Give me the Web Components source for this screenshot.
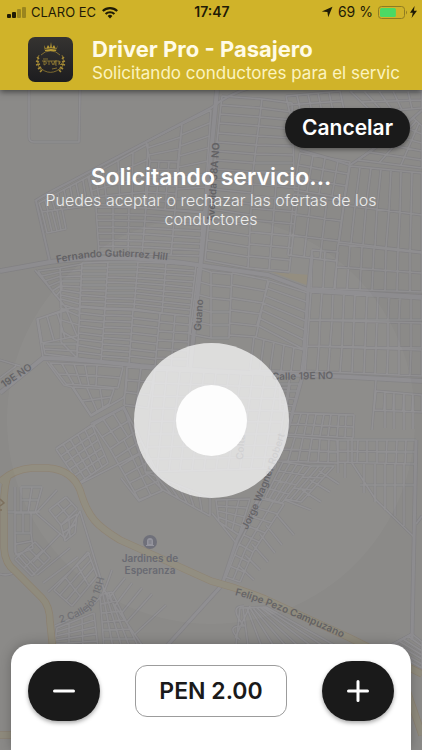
<!DOCTYPE html>
<html lang="es">
<head>
<meta charset="utf-8">
<meta name="viewport" content="width=device-width, initial-scale=1">
<title>Driver Pro - Pasajero</title>
<style>
    body {
        margin: 0;
        font-family: Inter, "Liberation Sans", sans-serif;
        background: #8b8a88;
    }
</style>
</head>
<body>
<request-screen>
    <notification-header slot="header">
        <status-bar slot="status" carrier="CLARO EC" time="17:47" battery="69"></status-bar>
        <span slot="title">Driver Pro - Pasajero</span>
        <span slot="message">Solicitando conductores para el servic</span>
    </notification-header>
    <street-map slot="map"></street-map>
    <search-pulse slot="map"></search-pulse>
    <pill-button slot="action">Cancelar</pill-button>
    <span slot="title">Solicitando servicio...</span>
    <span slot="text">Puedes aceptar o rechazar las ofertas de los conductores</span>
    <offer-panel slot="panel" currency="PEN" amount="2"></offer-panel>
</request-screen>

<script>
class RequestScreen extends HTMLElement {
    constructor() {
        super();
        this.attachShadow({ mode: 'open' }).innerHTML = `
            <style>
                :host {
                    display: flex;
                    flex-direction: column;
                    position: relative;
                    min-height: 100vh;
                    overflow: hidden;
                }
                header, main, footer { position: relative; }
                main {
                    flex: 1;
                    display: flex;
                    flex-direction: column;
                    padding: 18px 12px;
                }
                .action { align-self: flex-end; }
                h1 {
                    margin: 15px 0 0;
                    font-size: 23px;
                    line-height: 28px;
                    font-weight: 600;
                    text-align: center;
                    color: #fff;
                }
                p {
                    margin: 0 24px;
                    font-size: 16px;
                    line-height: 19px;
                    font-weight: 300;
                    text-align: center;
                    color: #ececec;
                }
                footer { padding: 0 11px; }
            </style>
            <slot name="map"></slot>
            <header><slot name="header"></slot></header>
            <main>
                <div class="action"><slot name="action"></slot></div>
                <h1><slot name="title"></slot></h1>
                <p><slot name="text"></slot></p>
            </main>
            <footer><slot name="panel"></slot></footer>
        `;
    }
}

class StatusBar extends HTMLElement {
    constructor() {
        super();
        const level = Number(this.getAttribute('battery'));
        this.attachShadow({ mode: 'open' }).innerHTML = `
            <style>
                :host {
                    display: grid;
                    grid-template-columns: 1fr auto 1fr;
                    align-items: center;
                    height: 24px;
                    padding: 0 5px 0 7px;
                    font-size: 14px;
                    line-height: 24px;
                    color: #1f1b06;
                }
                div { display: flex; align-items: center; gap: 5px; }
                .right { justify-content: flex-end; }
                .carrier { font-size: 13px; }
                .battery { display: flex; align-items: center; gap: 2px; }
                b { font-weight: 600; }
                svg { display: block; }
            </style>
            <div>
                <svg width="19" height="13" fill="#1f1b06">
                    <rect y="8" width="4" height="4" rx="1"/>
                    <rect x="5" y="6" width="4" height="6" rx="1"/>
                    <rect x="10" y="3" width="4" height="9" rx="1" opacity=".3"/>
                    <rect x="15" y="1" width="4" height="11" rx="1" opacity=".3"/>
                </svg>
                <span class="carrier">${this.getAttribute('carrier')}</span>
                <svg width="18" height="13" viewBox="0 0 18 13" fill="none" stroke="#1f1b06" stroke-width="2.2">
                    <path d="M1.8 5a10.3 10.3 0 0 1 14.4 0M4.6 8a6.4 6.4 0 0 1 8.8 0"/>
                    <path d="M9 12.5 6.6 10a3.5 3.5 0 0 1 4.8 0z" fill="#1f1b06" stroke="none"/>
                </svg>
            </div>
            <b>${this.getAttribute('time')}</b>
            <div class="right">
                <svg width="12" height="12" viewBox="0 0 12 12" fill="#1f1b06"><path d="M11.5.7 7.2 11.3 6.4 6 .8 5.6z"/></svg>
                <span>${level} %</span>
                <span class="battery">
                    <svg width="30" height="13" viewBox="0 0 30 13">
                        <rect x=".5" y=".5" width="26" height="12" rx="3" fill="none" stroke="#8f7c22"/>
                        <rect x="2" y="2" width="${level / 100 * 23}" height="9" rx="1.5" fill="#4bd964"/>
                        <path d="M28 4.5q2 2 0 4z" fill="#8f7c22"/>
                    </svg>
                    <svg width="7" height="12" viewBox="0 0 7 12" fill="#1f1b06"><path d="M4.6 0 0 6.7h2.8L1.6 12 7 4.8H3.9z"/></svg>
                </span>
            </div>
        `;
    }
}

class NotificationHeader extends HTMLElement {
    constructor() {
        super();
        this.attachShadow({ mode: 'open' }).innerHTML = `
            <style>
                :host {
                    display: block;
                    background: #d0b329;
                    box-shadow: 0 2px 6px rgba(0, 0, 0, .5);
                }
                .row {
                    display: flex;
                    align-items: flex-start;
                    gap: 19px;
                    padding: 13px 18px 5px 28px;
                }
                svg { flex: none; }
                .texts { min-width: 0; color: #fffbe6; }
                h2, p {
                    margin: 0;
                    line-height: 24px;
                    white-space: nowrap;
                }
                h2 { font-size: 22px; font-weight: 700; }
                p { font-size: 17px; font-weight: 400; color: #fcf3c0; }
            </style>
            <slot name="status"></slot>
            <div class="row">
                <svg width="45" height="45" viewBox="0 0 45 45" role="img" aria-label="Driver Pro">
                    <defs><linearGradient id="bg" x2="0" y2="1"><stop stop-color="#353331"/><stop offset="1" stop-color="#1d1d1f"/></linearGradient></defs>
                    <rect width="45" height="45" rx="7" fill="url(#bg)"/>
                    <g fill="none" stroke="#a58a35">
                        <path d="M13 18a13 13 0 0 1 19 0M12 30a13 13 0 0 0 21 0" stroke-width=".7"/>
                        <path d="M11 18q-4 9 3 16M34 18q4 9-3 16" stroke-width=".7"/>
                        <path d="m9 20 2 2m-3 2 3 1m-3 3 4-1m-2 5 3-2m-1 5 2-2M36 20l-2 2m3 2-3 1m3 3-4-1m2 5-3-2m1 5-2-2" stroke-width="1.6"/>
                    </g>
                    <path d="m16 8 2 4 2-4 2 3 1-6 1 6 2-3 2 4 2-4-2 6H17z" fill="#b89a35"/>
                    <path d="M17 12.500q6-2 12 0" fill="none" stroke="#282725" stroke-width=".7"/>
                    <path d="M15 22h5M14 24h17M16 24v4m0-4q5 2 0 4m5-4v4m2-4 2 4 2-4m2 0h-2v4h2m-2-2h2m2 2v-4q3 1 0 2l2 2M24 32l5-1" fill="none" stroke="#a68c38" stroke-width=".7"/>
                </svg>
                <div class="texts">
                    <h2><slot name="title"></slot></h2>
                    <p><slot name="message"></slot></p>
                </div>
            </div>
        `;
    }
}

class PillButton extends HTMLElement {
    constructor() {
        super();
        this.attachShadow({ mode: 'open' }).innerHTML = `
            <style>
                :host { display: block; }
                button {
                    display: block;
                    height: 40px;
                    padding: 0 17px;
                    border: 0;
                    border-radius: 20px;
                    background: #1a1a1a;
                    color: #fff;
                    font: 600 21px/40px Inter, "Liberation Sans", sans-serif;
                    box-shadow: 0 2px 4px rgba(0, 0, 0, .35);
                }
            </style>
            <button type="button"><slot></slot></button>
        `;
    }
}

class SearchPulse extends HTMLElement {
    constructor() {
        super();
        this.attachShadow({ mode: 'open' }).innerHTML = `
            <style>
                :host {
                    position: absolute;
                    left: 50%;
                    top: 56%;
                    transform: translate(-50%, -50%);
                    display: grid;
                    place-items: center;
                }
                i { grid-area: 1 / 1; border-radius: 50%; }
                .wave { width: 408px; height: 408px; background: rgba(255, 255, 255, .03); }
                .ring { width: 155px; height: 155px; background: rgba(255, 255, 255, .7); }
                .core { width: 71px; height: 71px; background: rgba(255, 255, 255, .93); }
            </style>
            <i class="wave"></i><i class="ring"></i><i class="core"></i>
        `;
    }
}

// Each block: four corners (clockwise from top left), columns, rows.
const BLOCKS = [
    [[39, 203], [95, 173], [100, 204], [42, 212], 9, 1],
    [[42, 212], [62, 209], [66, 229], [47, 233], 4, 1],
    [[88, 177], [148, 144], [145, 208], [94, 204], 4, 4],
    [[146, 142], [182, 124], [178, 162], [150, 161], 1, 3],
    [[150, 161], [178, 162], [175, 210], [146, 208], 3, 6],
    [[182, 124], [211, 110], [204, 212], [175, 210], 1, 8],
    [[96, 207], [146, 208], [142, 254], [99, 253], 3, 7],
    [[146, 208], [203, 213], [200, 256], [142, 254], 2, 7],
    [[222, 96], [262, 99], [253, 172], [214, 169], 1, 8],
    [[262, 99], [292, 103], [294, 172], [253, 172], 1, 8],
    [[214, 169], [253, 172], [248, 268], [205, 260], 1, 9],
    [[253, 172], [300, 176], [289, 272], [248, 268], 2, 8],
    [[286, 96], [340, 91], [344, 110], [290, 114], 5, 2],
    [[300, 153], [350, 162], [344, 198], [294, 190], 4, 3],
    [[294, 194], [344, 201], [336, 261], [288, 255], 3, 3],
    [[350, 166], [422, 173], [422, 215], [344, 205], 7, 1],
    [[344, 205], [422, 215], [422, 252], [339, 242], 7, 1],
    [[338, 244], [422, 253], [422, 292], [335, 289], 7, 2],
    [[350, 91], [422, 91], [422, 108], [372, 112], 5, 2],
    [[358, 160], [413, 118], [422, 126], [422, 168], 5, 3],
    [[312, 250], [338, 252], [334, 289], [311, 288], 2, 1],
    [[38, 271], [60, 268], [62, 289], [56, 296], 1, 5],
    [[60, 268], [82, 264], [79, 316], [61, 308], 1, 9],
    [[82, 263], [108, 262], [105, 308], [80, 306], 1, 8],
    [[108, 262], [138, 262], [134, 309], [105, 308], 1, 9],
    [[138, 262], [166, 263], [162, 313], [134, 309], 1, 9],
    [[166, 263], [196, 265], [190, 316], [162, 313], 1, 9],
    [[38, 319], [66, 309], [77, 336], [42, 343], 3, 1],
    [[61, 309], [80, 308], [77, 358], [61, 342], 1, 3],
    [[80, 307], [105, 309], [101, 362], [77, 358], 1, 8],
    [[105, 309], [133, 310], [129, 364], [101, 362], 1, 9],
    [[133, 310], [160, 313], [155, 367], [129, 364], 1, 7],
    [[160, 313], [190, 316], [187, 368], [155, 367], 2, 6],
    [[43, 344], [77, 344], [77, 358], [45, 354], 1, 2],
    [[50, 363], [97, 365], [96, 386], [66, 384], 4, 2],
    [[97, 365], [123, 367], [118, 388], [96, 386], 1, 2],
    [[73, 387], [114, 389], [109, 404], [91, 415], 3, 2],
    [[127, 367], [155, 369], [148, 408], [124, 405], 2, 3],
    [[155, 370], [290, 376], [275, 468], [145, 472], 11, 8],
    [[211, 272], [232, 274], [229, 338], [211, 338], 1, 5],
    [[232, 273], [268, 280], [256, 337], [229, 335], 1, 5],
    [[269, 281], [308, 293], [303, 349], [257, 325], 1, 6],
    [[198, 268], [211, 272], [211, 338], [190, 334], 1, 5],
    [[254, 337], [304, 350], [301, 372], [250, 370], 5, 1],
    [[311, 292], [422, 299], [422, 320], [309, 320], 10, 1],
    [[309, 320], [422, 323], [422, 348], [307, 346], 10, 1],
    [[307, 346], [422, 350], [422, 376], [305, 371], 10, 1],
    [[280, 384], [299, 384], [292, 413], [280, 410], 2, 4],
    [[293, 413], [354, 415], [353, 438], [287, 434], 8, 2],
    [[376, 391], [422, 395], [422, 412], [374, 410], 5, 1],
    [[286, 436], [337, 440], [338, 463], [278, 461], 6, 2],
    [[338, 440], [416, 440], [415, 464], [338, 462], 8, 2],
    [[56, 449], [92, 425], [108, 463], [79, 483], 5, 5],
    [[93, 424], [123, 408], [137, 431], [110, 449], 3, 2],
    [[110, 449], [137, 431], [162, 491], [139, 500], 2, 6],
    [[145, 472], [210, 498], [210, 516], [163, 490], 6, 1],
    [[21, 487], [42, 487], [35, 513], [21, 513], 2, 2],
    [[15, 513], [31, 513], [31, 533], [15, 533], 2, 1],
    [[15, 533], [31, 533], [33, 548], [16, 555], 1, 2],
    [[49, 510], [66, 497], [77, 509], [61, 525], 2, 2],
    [[61, 525], [77, 514], [75, 533], [65, 541], 2, 2],
    [[15, 559], [35, 542], [50, 558], [32, 576], 3, 2],
    [[54, 590], [88, 552], [97, 576], [72, 606], 3, 3],
    [[100, 595], [112, 592], [139, 648], [104, 648], 4, 6],
    [[57, 628], [94, 613], [98, 648], [54, 648], 3, 5],
    [[216, 500], [250, 499], [239, 535], [219, 522], 3, 4],
    [[283, 462], [311, 466], [282, 503], [265, 498], 4, 4],
    [[262, 499], [284, 504], [253, 552], [239, 544], 2, 5],
    [[239, 544], [253, 552], [240, 582], [226, 577], 2, 3],
    [[311, 466], [334, 466], [301, 502], [285, 499], 3, 3],
    [[240, 608], [266, 607], [334, 645], [236, 645], 8, 1],
    [[386, 648], [412, 634], [422, 642], [422, 668], 6, 1]
];

const STREETS = [
    'M29 90V137Q29 142 34 142H79L80 90',
    'M0 360 20 366M0 378 16 366',
    'M35 270 68 310 37 319 43 357M47 362 64 385 72 387 91 416 123 398Q127 394 127 368',
    'M57 448 80 433 124 407 160 478M79 484 140 453M121 478 139 501 163 490',
    'M352 438V463L376 500 414 537M364 464V493M375 464V502M385 464V510M395 464V516M404 464V526M338 463V473M345 463V478M360 485H415',
    'M376 380 372 430M385 395V428M394 395V429M404 395V430M413 395V429',
    'M15 487V552L35 575M5 512H40M36 513 57 490M36 513 65 538 80 511M0 574Q10 577 17 570',
    'M37 575 70 548M43 583 78 557M48 592 90 553M33 562 61 533',
    'M80 511 104 590 144 648M104 590Q98 608 55 626M112 570 104 592M125 578 108 599M132 583 114 607M142 588 120 615M152 594 127 622M166 605 134 635',
    'M285 500 311 510M276 514 294 535M266 525 282 545M260 534 275 553M252 544 268 562M245 555 260 570M238 565 254 580M302 490 321 502M310 480 330 492M319 471 339 484',
    'M244 606Q228 606 244 626Q224 625 240 640M250 606 235 638',
    'M212 513 236 543'
];

// [path, width]
const ROADS = [
    ['M35 201Q48 193 68 183L146 142 211 108Q228 94 250 88', 2],
    ['M36 201 50 262', 2],
    ['M0 271 50 262Q120 252 211 267L268 275 308 290 422 297', 4],
    ['M217 90 210 165 203 240 197 300 190 370', 4],
    ['M0 393 43 358Q80 359 140 366L211 371 280 374 350 377 422 381', 4],
    ['M312 255 308 292 303 374 290 422 266 484 237 540 222 585 165 648', 3],
    ['M300 150Q326 157 350 165 390 140 422 110', 2],
    ['M416 440 414 540 412 640', 3],
    ['M422 516 416 524M412 634 386 648', 2],
    ['M91 424 124 407 145 470', 2]
];

const AVENUES = 'M0 482Q14 469 32 468H48Q72 470 80 490C88 518 97 526 120 540L211 581Q238 588 265 599L350 638 422 674M8 475Q3 490 4 512V548Q5 564 15 571L42 598Q50 606 50 622L54 660M0 735H60M395 655 422 735';

class StreetMap extends HTMLElement {
    constructor() {
        super();
        const grid = STREETS.join('') + BLOCKS.map(b => this.block(...b)).join('');
        const roads = (color, extra) => ROADS.map(([d, w]) =>
            `<path d="${d}" stroke="${color}" stroke-width="${w + extra}"/>`).join('');
        this.attachShadow({ mode: 'open' }).innerHTML = `
            <style>
                :host { display: block; position: absolute; inset: 0; }
                svg { display: block; width: 100%; height: 100%; }
                text { font: 600 10px Inter, "Liberation Sans", sans-serif; fill: #626164; }
                .soft { font-weight: 500; fill: #707074; }
                .place { fill: #65666e; text-anchor: middle; }
            </style>
            <svg viewBox="0 0 422 750" preserveAspectRatio="xMidYMid slice">
                <defs>
                    <path id="fernando" d="M57 263Q112 250 190 264"/>
                    <path id="callejon" d="M60 623C88 614 98 611 106 570"/>
                    <path id="felipe" d="M235 595Q265 602 365 648"/>
                    <path id="jorge" d="M247 530Q265 500 294 406"/>
                </defs>
                <rect width="422" height="750" fill="#8b8a88"/>
                <path d="M272 272 310 275 309 286Z" fill="#918b7c"/>
                <g fill="none" stroke-linejoin="round">
                    <path d="${grid}" stroke="#828183" stroke-width="2.8"/>
                    ${roads('#828183', 1.4)}
                    <path d="${grid}" stroke="#8f8e90" stroke-width="1.6"/>
                    ${roads('#8d8c8f', 0)}
                    <path d="${AVENUES}" stroke="#8c8170" stroke-width="7.4"/>
                    <path d="${AVENUES}" stroke="#8f8b7d" stroke-width="6"/>
                </g>
                <text><textPath href="#fernando">Fernando Gutierrez Hill</textPath></text>
                <text transform="translate(214 222) rotate(-86)">Avenida 38A NO</text>
                <text transform="translate(201 331) rotate(-86)">Guano</text>
                <text transform="translate(272 380) rotate(-1)">Calle 19E NO</text>
                <text transform="translate(4 388) rotate(-34)">19E NO</text>
                <text transform="translate(243 460) rotate(-86)">Colta</text>
                <text><textPath href="#jorge">Jorge Wagner Robert</textPath></text>
                <text><textPath href="#felipe">Felipe Pezo Campuzano</textPath></text>
                <text class="soft"><textPath href="#callejon">2 Callejón 18H</textPath></text>
                <circle cx="150" cy="542" r="7" fill="#6b6c76"/>
                <path d="M146 546v-1h1v-4a3 3 0 0 1 6 0v4h1v1z" fill="#91919a"/>
                <path d="M148.500 541h3M148.500 543h3" stroke="#6b6c76" stroke-width=".8"/>
                <text class="place" x="150" y="562">Jardines de</text>
                <text class="place" x="150" y="574">Esperanza</text>
                <path d="M0 499 4 503 0 506M0 510h2" fill="none" stroke="#7d705e" stroke-width="1.500"/>
            </svg>
        `;
    }

    block(a, b, c, d, cols, rows) {
        const mix = (p, q, t) => [p[0] + (q[0] - p[0]) * t, p[1] + (q[1] - p[1]) * t];
        const line = (p, q) => `M${p.map(Math.round)}L${q.map(Math.round)}`;
        let out = '';
        for (let i = 0; i <= cols; i++) out += line(mix(a, b, i / cols), mix(d, c, i / cols));
        for (let j = 0; j <= rows; j++) out += line(mix(a, d, j / rows), mix(b, c, j / rows));
        return out;
    }
}

class OfferPanel extends HTMLElement {
    constructor() {
        super();
        this.amount = Number(this.getAttribute('amount'));
        this.attachShadow({ mode: 'open' }).innerHTML = `
            <style>
                :host {
                    display: flex;
                    align-items: center;
                    justify-content: space-between;
                    padding: 17px 17px 29px;
                    border-radius: 20px 20px 0 0;
                    background: #fff;
                    box-shadow: 0 0 12px rgba(0, 0, 0, .25);
                }
                button {
                    display: grid;
                    place-items: center;
                    width: 72px;
                    height: 60px;
                    padding: 0;
                    border: 0;
                    border-radius: 30px;
                    background: #1a1a1a;
                    box-shadow: 0 2px 4px rgba(0, 0, 0, .35);
                }
                input {
                    box-sizing: border-box;
                    width: 152px;
                    height: 52px;
                    padding: 0;
                    border: 1px solid #9c9c9c;
                    border-radius: 12px;
                    background: #fff;
                    color: #1a1a1a;
                    font: 600 23px Inter, "Liberation Sans", sans-serif;
                    text-align: center;
                }
                path { fill: none; stroke: #fff; stroke-width: 3; stroke-linecap: round; }
            </style>
            <button type="button" aria-label="Bajar oferta" data-step="-0.5">
                <svg width="24" height="24"><path d="M2.500 12h19"/></svg>
            </button>
            <input type="text" aria-label="Oferta" readonly>
            <button type="button" aria-label="Subir oferta" data-step="0.5">
                <svg width="24" height="24"><path d="M2.500 12h19M12 2.500v19"/></svg>
            </button>
        `;
        this.shadowRoot.querySelectorAll('button').forEach(button => {
            button.addEventListener('click', () => {
                this.amount = Math.max(0, this.amount + Number(button.dataset.step));
                this.update();
            });
        });
        this.update();
    }

    update() {
        this.shadowRoot.querySelector('input').value =
            `${this.getAttribute('currency')} ${this.amount.toFixed(2)}`;
    }
}

customElements.define('street-map', StreetMap);
customElements.define('search-pulse', SearchPulse);
customElements.define('status-bar', StatusBar);
customElements.define('notification-header', NotificationHeader);
customElements.define('pill-button', PillButton);
customElements.define('offer-panel', OfferPanel);
customElements.define('request-screen', RequestScreen);
</script>
</body>
</html>
